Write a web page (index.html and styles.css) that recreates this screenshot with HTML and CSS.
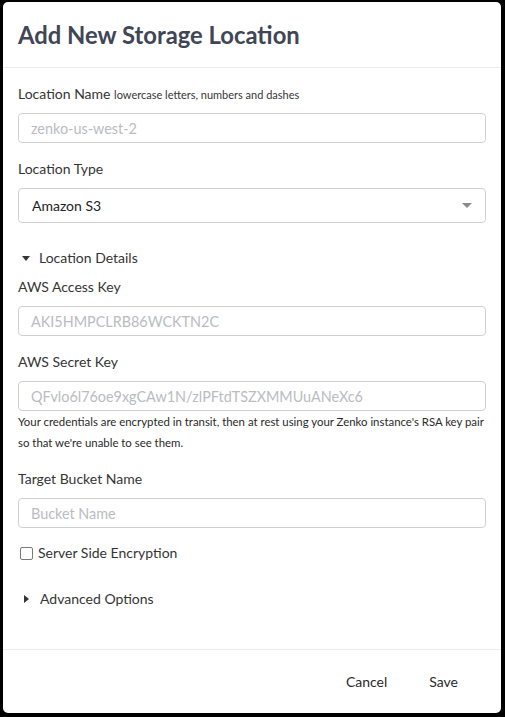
FILE: index.html
```html
<!DOCTYPE html>
<html lang="en">
<head>
<meta charset="utf-8">
<title>Add New Storage Location</title>
<link rel="stylesheet" href="styles.css">
</head>
<body>
<div class="dialog">
  <div class="dialog-header">
    <h1 class="title">Add New Storage Location</h1>
  </div>
  <div class="dialog-body">
    <div class="label">Location Name <span class="hint">lowercase letters, numbers and dashes</span></div>
    <div class="input"><span class="placeholder">zenko-us-west-2</span></div>

    <div class="label gap">Location Type</div>
    <div class="select">
      <span class="select-value">Amazon S3</span>
      <span class="select-arrow"></span>
    </div>

    <div class="toggle details">
      <span class="tri-down"></span>
      <span>Location Details</span>
    </div>

    <div class="label tight">AWS Access Key</div>
    <div class="input"><span class="placeholder">AKI5HMPCLRB86WCKTN2C</span></div>

    <div class="label gap">AWS Secret Key</div>
    <div class="input"><span class="placeholder">QFvlo6l76oe9xgCAw1N/zlPFtdTSZXMMUuANeXc6</span></div>
    <p class="help">Your credentials are encrypted in transit, then at rest using your Zenko instance's RSA key pair so that we're unable to see them.</p>

    <div class="label gap">Target Bucket Name</div>
    <div class="input"><span class="placeholder">Bucket Name</span></div>

    <div class="check-row">
      <span class="checkbox"></span>
      <span>Server Side Encryption</span>
    </div>

    <div class="toggle advanced">
      <span class="tri-right"></span>
      <span>Advanced Options</span>
    </div>
  </div>
  <div class="dialog-footer">
    <button class="btn">Cancel</button>
    <button class="btn">Save</button>
  </div>
</div>
</body>
</html>
```

FILE: styles.css
```css
html, body {
  margin: 0;
  padding: 0;
  background: #000;
  height: 100%;
}
body {
  font-family: Lato, "Noto Sans", "Liberation Sans", sans-serif;
  color: #353535;
  padding: 2px 0 0 3px;
  box-sizing: border-box;
}
.dialog {
  width: 498px;
  height: 711px;
  background: #fff;
  border-radius: 5px;
  display: flex;
  flex-direction: column;
  overflow: hidden;
}
.dialog-header {
  height: 65px;
  border-bottom: 1px solid #ececec;
  padding: 0 15px;
  display: flex;
  align-items: center;
}
.title {
  margin: 0;
  font-size: 23.8px;
  font-weight: 700;
  color: #404656;
  padding-top: 1px;
}
.dialog-body {
  padding: 16px 15px 0;
  height: 582px;
  box-sizing: border-box;
  border-bottom: 1px solid #ececec;
  display: flex;
  flex-direction: column;
}
.label {
  font-size: 14px;
  line-height: 20px;
  margin-bottom: 8px;
  color: #353535;
}
.label.gap { margin-top: 16px; margin-bottom: 9px; }
.label.tight { margin-top: 9px; margin-bottom: 9px; }
.hint {
  font-size: 11px;
}
.input {
  height: 30px;
  border: 1px solid #cfcfcf;
  border-radius: 4px;
  box-sizing: border-box;
  padding: 0 12px;
  display: flex;
  align-items: center;
  font-size: 14.4px;
}
.placeholder {
  color: #b9bcc2;
}
.select {
  height: 35px;
  border: 1px solid #cfcfcf;
  border-radius: 4px;
  box-sizing: border-box;
  padding: 0 12px 0 13px;
  display: flex;
  align-items: center;
  justify-content: space-between;
  font-size: 14px;
  color: #222;
}
.select-arrow {
  width: 0;
  height: 0;
  border-left: 5px solid transparent;
  border-right: 5px solid transparent;
  border-top: 5px solid #8a8a8a;
  margin-right: 1px;
}
.toggle {
  display: flex;
  align-items: center;
  font-size: 14px;
  line-height: 20px;
  color: #353535;
}
.toggle.details { margin-top: 25px; gap: 9px; padding-left: 4px; }
.toggle.advanced { margin-top: 26px; gap: 11px; padding-left: 6px; }
.tri-down {
  width: 0;
  height: 0;
  border-left: 4px solid transparent;
  border-right: 4px solid transparent;
  border-top: 5px solid #353535;
}
.tri-right {
  width: 0;
  height: 0;
  border-top: 4px solid transparent;
  border-bottom: 4px solid transparent;
  border-left: 5px solid #353535;
}
.help {
  margin: 0;
  font-size: 11.4px;
  line-height: 21px;
  color: #2a2a2a;
}
.check-row {
  margin-top: 15px;
  display: flex;
  align-items: center;
  gap: 5px;
  font-size: 14px;
  line-height: 20px;
  padding-left: 2px;
}
.checkbox {
  width: 11px;
  height: 11px;
  border: 1px solid #7a7a7a;
  border-radius: 2px;
}
.dialog-footer {
  flex: 1;
  display: flex;
  align-items: center;
  justify-content: flex-end;
  padding: 0 27px 0 0;
  gap: 10px;
}
.btn {
  font-family: inherit;
  font-size: 14px;
  color: #2a2a2a;
  background: transparent;
  border: none;
  padding: 6px 16px;
  cursor: pointer;
}
```
